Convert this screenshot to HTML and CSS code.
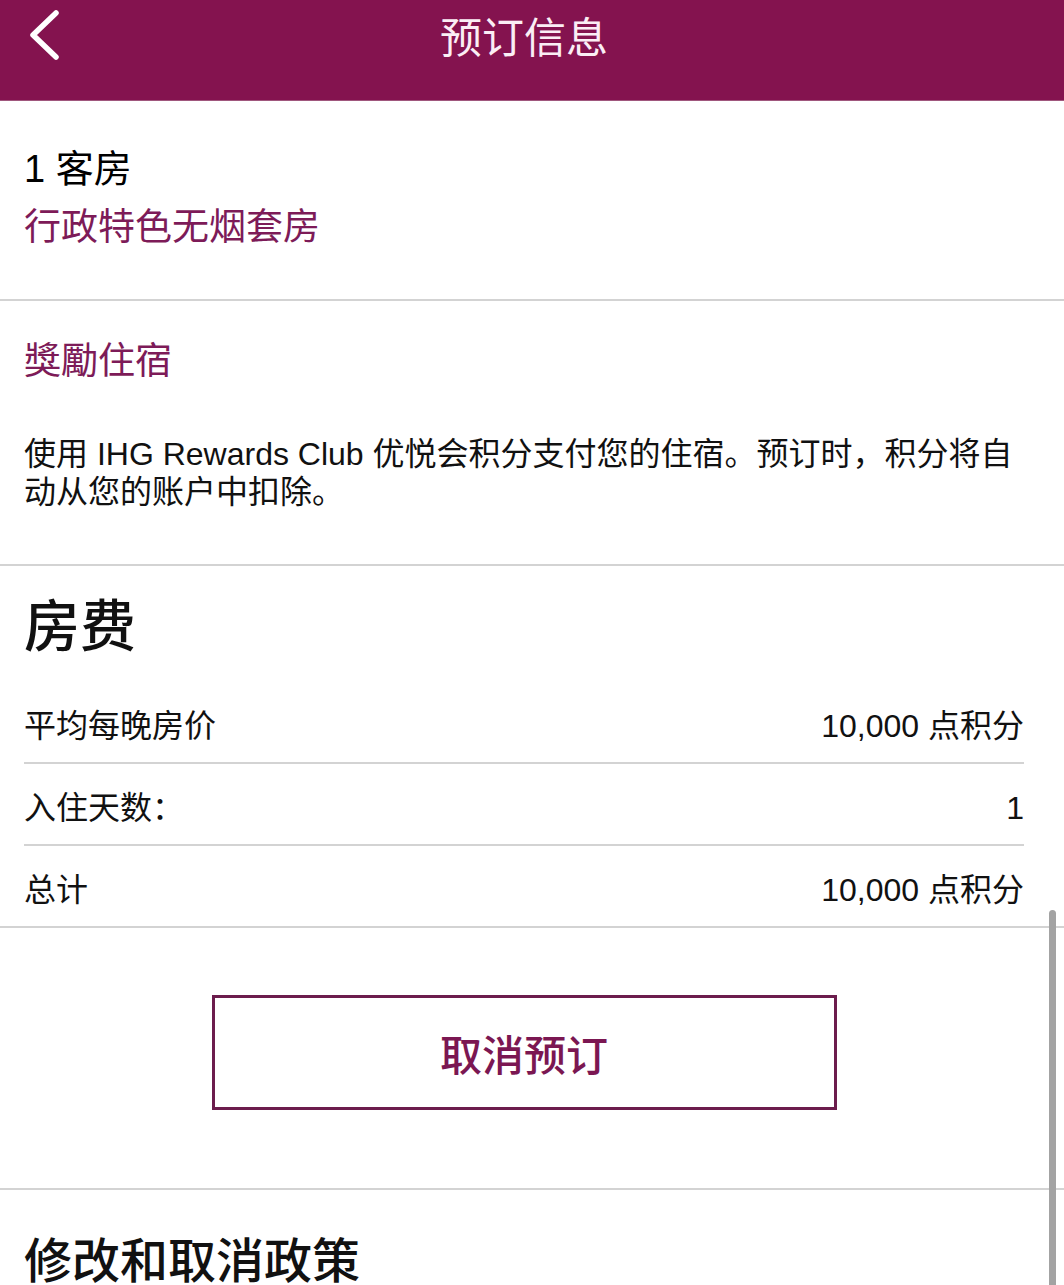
FILE: index.html
```html
<!DOCTYPE html>
<html lang="zh-CN">
<head>
  <meta charset="UTF-8">
  <meta name="viewport" content="width=device-width, initial-scale=1">
  <title>预订信息</title>
  <link rel="stylesheet" href="styles.css">
</head>
<body>

<div class="topbar">
  <a class="back-btn" href="#">
    <svg width="36" height="54" viewBox="0 0 36 54">
      <path d="M30 5 L7 27 L30 49" fill="none" stroke="#fff" stroke-width="5.5" stroke-linecap="round" stroke-linejoin="round"/>
    </svg>
  </a>
  <h1 class="topbar-title">预订信息</h1>
  <span></span>
</div>

<div class="section room">
  <div class="room-count">1 客房</div>
  <div class="room-type">行政特色无烟套房</div>
</div>

<div class="section stay">
  <div class="stay-title">獎勵住宿</div>
  <p class="stay-text">使用 IHG Rewards Club 优悦会积分支付您的住宿。预订时，积分将自动从您的账户中扣除。</p>
</div>

<div class="section fees">
  <h2 class="fees-title">房费</h2>
  <div class="fee-row">
    <span>平均每晚房价</span>
    <span>10,000 点积分</span>
  </div>
  <div class="fee-row">
    <span>入住天数：</span>
    <span>1</span>
  </div>
  <div class="fee-row">
    <span>总计</span>
    <span>10,000 点积分</span>
  </div>
</div>

<div class="section cancel-box">
  <button class="cancel-btn">取消预订</button>
</div>

<div class="section policy">
  <h2 class="policy-title">修改和取消政策</h2>
</div>

<div class="scroll-thumb"></div>

</body>
</html>
```

FILE: styles.css
```css
body {
  margin: 0;
  font-family: "Liberation Sans", "Noto Sans CJK SC", sans-serif;
  background: #fff;
  color: #111;
  overflow: hidden;
}
.topbar {
  display: grid;
  grid-template-columns: 1fr auto 1fr;
  align-items: center;
  height: 70px;
  padding: 0 40px 30px 24px;
  background: #84134f;
  border-bottom: 1px solid #a0577d;
}
.back-btn {
  display: flex;
  margin-left: 2px;
}
.topbar-title {
  margin: 0;
  font-family: "Noto Sans CJK SC", sans-serif;
  font-size: 42px;
  font-weight: 400;
  color: #fbeef5;
  line-height: 50px;
}
.section {
  padding: 0 40px 0 24px;
  border-bottom: 2px solid #d3d3d3;
}
.room {
  padding-top: 44px;
  padding-bottom: 47px;
}
.room-count {
  font-size: 38px;
  line-height: 48px;
  color: #000;
}
.room-type {
  margin-top: 11px;
  font-size: 37px;
  line-height: 48px;
  color: #7d1b58;
}
.stay {
  padding-top: 37px;
  padding-bottom: 53px;
}
.stay-title {
  font-size: 37px;
  line-height: 48px;
  color: #7d1b58;
}
.stay-text {
  margin: 49px 0 0;
  font-size: 32px;
  line-height: 38px;
}
.fees {
  padding-top: 24px;
}
.fees-title {
  margin: 0 0 28px;
  font-family: "Noto Sans CJK SC", sans-serif;
  font-size: 56px;
  font-weight: 500;
  line-height: 64px;
}
.fee-row {
  display: flex;
  justify-content: space-between;
  padding: 26px 0 18px;
  font-size: 32px;
  line-height: 36px;
  border-bottom: 2px solid #d3d3d3;
}
.fee-row:last-child {
  border-bottom: none;
}
.cancel-box {
  display: flex;
  justify-content: center;
  padding-top: 67px;
  padding-bottom: 78px;
}
.cancel-btn {
  width: 625px;
  height: 115px;
  background: #fff;
  border: 3px solid #6c1d4d;
  font-family: "Noto Sans CJK SC", sans-serif;
  font-size: 42px;
  font-weight: 500;
  color: #7b1752;
  cursor: pointer;
}
.policy {
  padding-top: 39px;
  border-bottom: none;
}
.policy-title {
  margin: 0;
  font-family: "Noto Sans CJK SC", sans-serif;
  font-size: 48px;
  font-weight: 500;
  line-height: 56px;
}
.scroll-thumb {
  position: absolute;
  left: 1049px;
  top: 910px;
  width: 7px;
  height: 400px;
  background: #a3a3a3;
  border-radius: 4px;
}
```
